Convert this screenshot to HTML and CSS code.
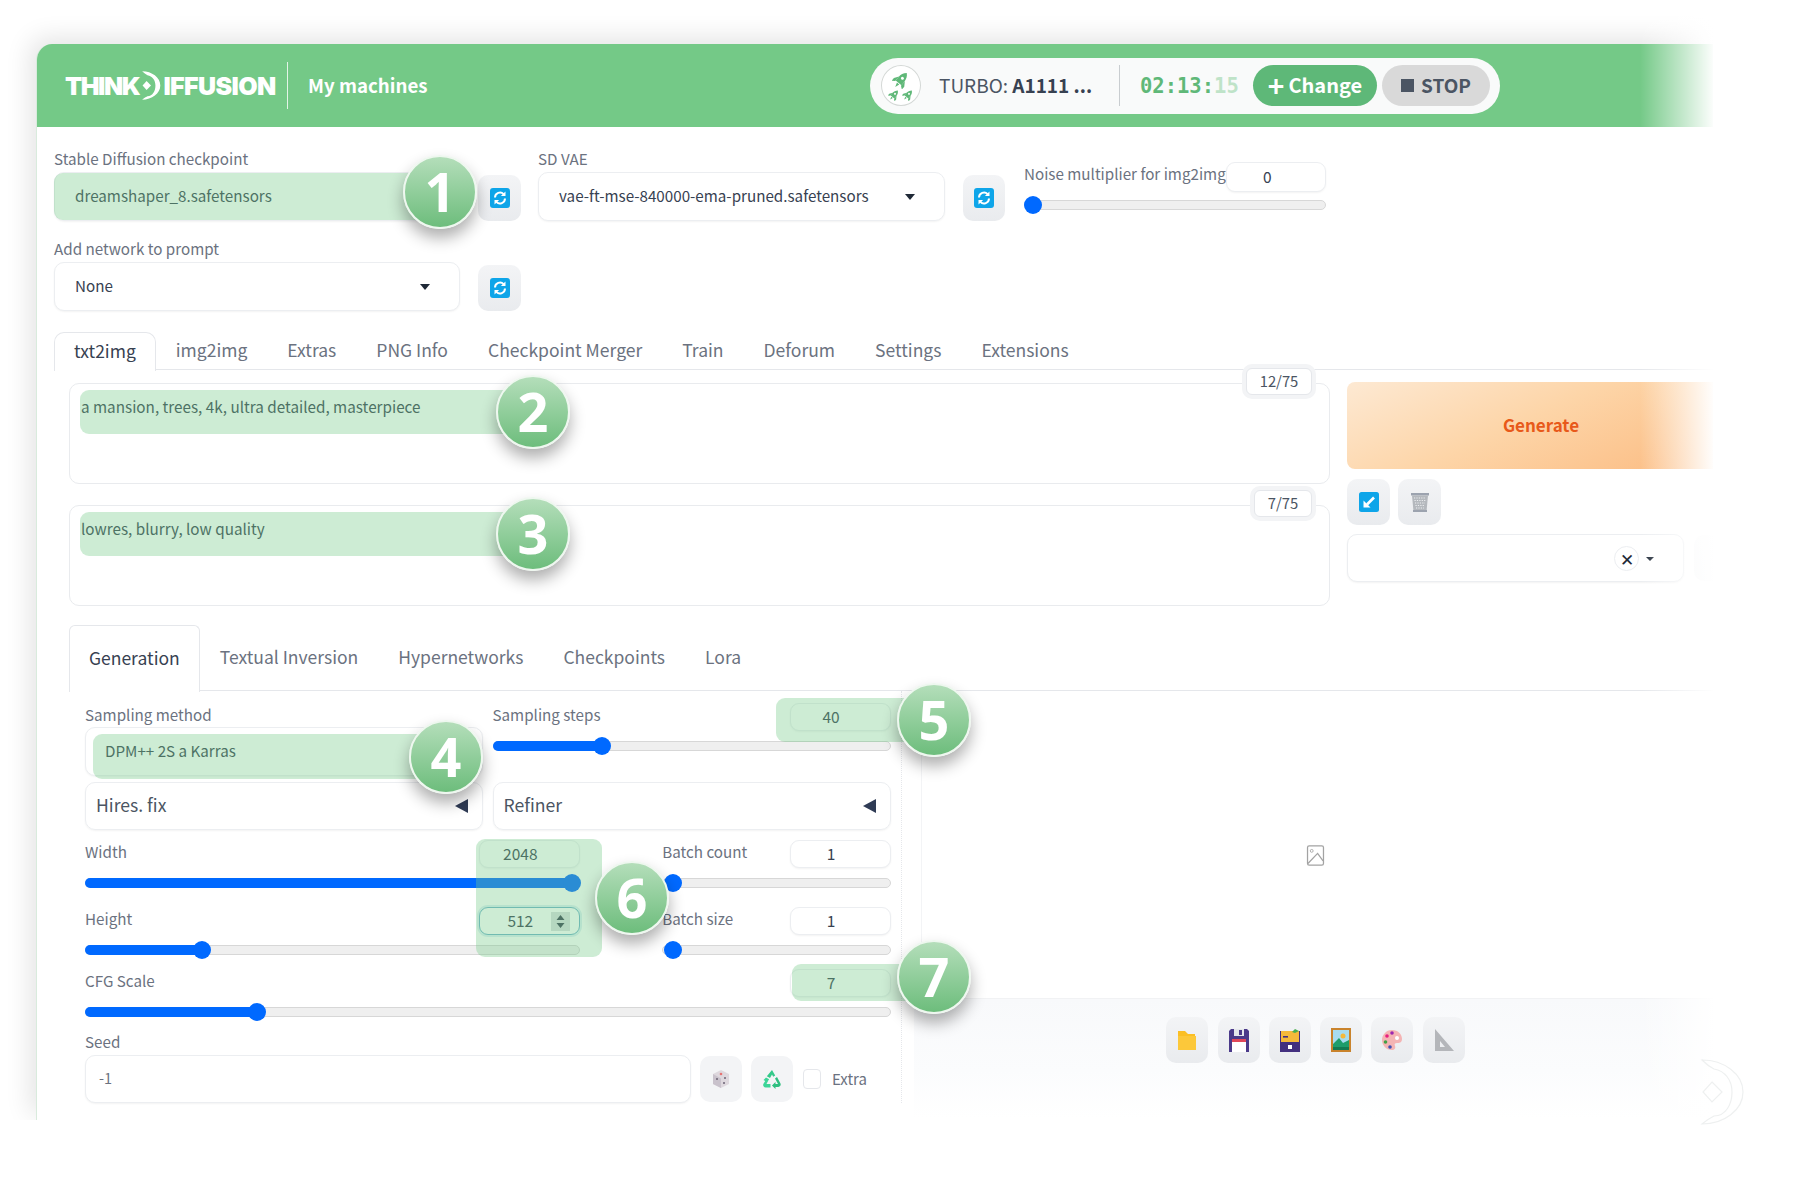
FILE: index.html
```html
<!DOCTYPE html>
<html lang="en">
<head>
<meta charset="utf-8">
<title>ThinkDiffusion</title>
<link rel="stylesheet" href="styles.css">
</head>
<body>
<svg class="defs" width="0" height="0" aria-hidden="true">
  <symbol id="refresh" viewBox="0 0 20 20">
    <rect width="20" height="20" rx="3" fill="#0ea5e9"/>
    <path d="M5 9.500a5 5 0 0 1 8.600-3.400M15 10.500a5 5 0 0 1-8.600 3.400" fill="none" stroke="#fff" stroke-width="2"/>
    <path d="M15.500 3.500v4.600h-4.600zM4.500 16.500v-4.600h4.600z" fill="#fff"/>
  </symbol>
  <symbol id="rocket" viewBox="0 0 24 24">
    <g transform="rotate(40 12 12)">
      <path d="M12 0c3.500 3 5 7 5 11v6H7v-6c0-4 1.500-8 5-11z" fill="currentColor"/>
      <path d="M7 10l-4 6v5l4-3zM17 10l4 6v5l-4-3zM10 18h4l-2 6z" fill="currentColor"/>
      <circle cx="12" cy="9" r="2" fill="#fff"/>
    </g>
  </symbol>
  <symbol id="dmark" viewBox="0 0 48 70">
    <path d="M4 3c22 0 41 14 41 32S26 67 4 67c6-5 10-7 12-8 12 0 18-12 18-24S27 14 16 12C12 10 8 7 4 3z" fill="currentColor"/>
    <path d="M14 25l10 10-10 10-9-10z" fill="currentColor"/>
  </symbol>
</svg>
<div class="stage">
  <div class="card">
    <header class="topbar">
      <div class="logo"><span class="logo-think">THINK</span><svg class="logo-d"><use href="#dmark"/></svg><span>IFFUSION</span></div>
      <div class="topbar-sep"></div>
      <div class="machines">My machines</div>
      <div class="pill">
        <div class="rocket-ring">
          <svg class="rk rk-a"><use href="#rocket"/></svg>
          <div class="rk-row"><svg class="rk rk-b"><use href="#rocket"/></svg><svg class="rk rk-b"><use href="#rocket"/></svg></div>
        </div>
        <div class="turbo">TURBO: <b>A1111 ...</b></div>
        <div class="pill-sep"></div>
        <div class="timer">02:13:<span class="timer-dim">15</span></div>
        <div class="pill-btn pill-change"><span class="plus">+</span> Change</div>
        <div class="pill-btn pill-stop"><span class="stop-sq"></span> STOP</div>
      </div>
    </header>

    <main class="content">
      <section class="settings-row">
        <div class="setting w467">
          <div class="label lh20">Stable Diffusion checkpoint</div>
          <div class="ctl-row">
            <div class="select grow"><span>dreamshaper_8.safetensors</span></div>
            <div class="tool tool-r"><svg class="ic20"><use href="#refresh"/></svg></div>
          </div>
        </div>
        <div class="setting w467 gap17">
          <div class="label lh20">SD VAE</div>
          <div class="ctl-row">
            <div class="select grow"><span>vae-ft-mse-840000-ema-pruned.safetensors</span><i class="caret"></i></div>
            <div class="tool tool-r tool-narrow"><svg class="ic20"><use href="#refresh"/></svg></div>
          </div>
        </div>
        <div class="noise">
          <div class="field-head">
            <div class="label noise-label">Noise multiplier for img2img</div>
            <div class="num num-noise">0</div>
          </div>
          <div class="slider"><i class="thumb thumb-0"></i></div>
        </div>
      </section>
      <section class="settings-row second">
        <div class="setting w467">
          <div class="label lh20">Add network to prompt</div>
          <div class="ctl-row">
            <div class="select grow"><span>None</span><i class="caret"></i></div>
            <div class="tool tool-r"><svg class="ic20"><use href="#refresh"/></svg></div>
          </div>
        </div>
      </section>

      <nav class="tabs">
        <div class="tab active">txt2img</div><div class="tab">img2img</div><div class="tab">Extras</div><div class="tab">PNG Info</div><div class="tab">Checkpoint Merger</div><div class="tab">Train</div><div class="tab">Deforum</div><div class="tab">Settings</div><div class="tab">Extensions</div>
      </nav>

      <section class="prompt-area">
        <div class="prompts">
          <div class="prompt">a mansion, trees, 4k, ultra detailed, masterpiece<div class="counter c12">12/75</div></div>
          <div class="prompt">lowres, blurry, low quality<div class="counter c7">7/75</div></div>
        </div>
        <div class="actions">
          <div class="generate">Generate</div>
          <div class="action-tools">
            <div class="tool tool-a"><svg class="ic20" viewBox="0 0 20 20"><rect width="20" height="20" rx="2.500" fill="#0ea5e9"/><path d="M15 5.500L8 12.500" stroke="#fff" stroke-width="2.600"/><path d="M4.500 8.500v7h7z" fill="#fff"/></svg></div>
            <div class="tool tool-a"><svg class="ic20" viewBox="0 0 20 20"><path d="M1 1h18v2.500H1z" fill="#9ca3af"/><path d="M2 3.500h16l-1.500 16h-13z" fill="#b4b8bd"/><path d="M4 6h12M4.500 8.500h11M5 11h10M5.500 13.500h9M6 16h8" stroke="#eceef0" stroke-width="1" stroke-dasharray="1.200 1.200"/><path d="M3 18h14v2H3z" fill="#9ca3af"/></svg></div>
          </div>
          <div class="styles-row">
            <div class="select styles"><span class="close">✕</span><i class="caret caret-sm"></i></div>
            <div class="tool tool-a"></div>
          </div>
        </div>
      </section>

      <nav class="subtabs">
        <div class="subtab active">Generation</div><div class="subtab">Textual Inversion</div><div class="subtab">Hypernetworks</div><div class="subtab">Checkpoints</div><div class="subtab">Lora</div>
      </nav>

      <section class="workspace">
        <div class="form">
          <div class="two-col">
            <div class="col">
              <div class="label lh24">Sampling method</div>
              <div class="select sampler"><span>DPM++ 2S a Karras</span></div>
            </div>
            <div class="col">
              <div class="field-head"><div class="label lh24">Sampling steps</div><div class="num">40</div></div>
              <div class="slider"><i class="fill fill-steps"></i><i class="thumb thumb-steps"></i></div>
            </div>
          </div>
          <div class="two-col accordions">
            <div class="col accordion">Hires. fix<i class="tri"></i></div>
            <div class="col accordion">Refiner<i class="tri"></i></div>
          </div>
          <div class="size-grid">
            <div class="size-col">
              <div class="field-head"><div class="label lh24">Width</div><div class="num">2048</div></div>
              <div class="slider"><i class="fill fill-width"></i><i class="thumb thumb-width"></i></div>
              <div class="field-head next"><div class="label lh24">Height</div><div class="num focused">512<svg class="spin" viewBox="0 0 19 19"><rect width="19" height="19" fill="#d9dee0"/><path d="M9.500 3l4 5h-8zM9.500 16l-4-5h8z" fill="#374151"/></svg></div></div>
              <div class="slider"><i class="fill fill-height"></i><i class="thumb thumb-height"></i></div>
            </div>
            <div class="batch-col">
              <div class="field-head"><div class="label lh24">Batch count</div><div class="num">1</div></div>
              <div class="slider"><i class="thumb thumb-batch"></i></div>
              <div class="field-head next"><div class="label lh24">Batch size</div><div class="num">1</div></div>
              <div class="slider"><i class="thumb thumb-batch"></i></div>
            </div>
          </div>
          <div class="cfg">
            <div class="field-head"><div class="label lh24">CFG Scale</div><div class="num">7</div></div>
            <div class="slider"><i class="fill fill-cfg"></i><i class="thumb thumb-cfg"></i></div>
          </div>
          <div class="label lh24 seed-label">Seed</div>
          <div class="seed-row">
            <div class="select seed"><span>-1</span></div>
            <div class="tool tool-faint"><svg class="ic20" viewBox="0 0 20 20"><path d="M10 1l8 4v10l-8 4-8-4V5z" fill="#ded8de"/><path d="M10 9.500v9.500l-8-4V5z" fill="#c9c2cc"/><circle cx="10" cy="5" r="1.300" fill="#e57373"/><circle cx="6" cy="10" r="1" fill="#6b6375"/><circle cx="14" cy="9" r="1" fill="#6b6375"/><circle cx="13" cy="14" r="1" fill="#6b6375"/></svg></div>
            <div class="tool tool-faint"><svg class="ic20" viewBox="0 0 20 20"><path d="M10 1l3.200 5.500-2 1.200L10 5.600 8 9 4.800 7.200z" fill="#34c98a"/><path d="M15 8l3.500 6.500a2.500 2.500 0 0 1-2.200 3.500h-2.800v2l-3.500-3.500 3.500-3.500v2h2.500L13 9.500z" fill="#2fbf80"/><path d="M4 8.500l3.200 1.800-.8 1L4.500 15h4v3.500H3.700a2.500 2.500 0 0 1-2.200-3.700L3.200 12 1.500 11z" fill="#3dd598"/></svg></div>
            <div class="checkbox"></div>
            <div class="label extra">Extra</div>
          </div>
        </div>

        <div class="output">
          <div class="preview">
            <svg class="pic" viewBox="0 0 21 25"><rect x="1" y="1" width="19" height="23" rx="2" fill="none" stroke="#a3a3a3" stroke-width="1.500"/><circle cx="6" cy="7" r="1.700" fill="none" stroke="#a3a3a3"/><path d="M1.500 22L13 10l6.500 9" fill="none" stroke="#a3a3a3" stroke-width="1.500"/></svg>
          </div>
          <div class="toolbar">
            <div class="tool tool-b"><svg class="ic20" viewBox="0 0 20 24"><path d="M1 3h7l3 3h7v16H1z" fill="#fbbf24"/><path d="M1 8h18v14H1z" fill="#fcc83a"/></svg></div>
            <div class="tool tool-b"><svg class="ic20" viewBox="0 0 20 24"><path d="M2 1h16l2 2v21H0V3z" fill="#4b3a8a"/><rect x="5" y="1" width="10" height="7" fill="#e5e7eb"/><rect x="10" y="2" width="3" height="5" fill="#4b3a8a"/><rect x="3" y="12" width="14" height="12" fill="#fff"/><rect x="3" y="11" width="14" height="3" fill="#e0485a"/></svg></div>
            <div class="tool tool-b"><svg class="ic20" viewBox="0 0 20 24"><rect x="0" y="3" width="20" height="21" fill="#43307f"/><rect x="1" y="3" width="18" height="11" fill="#f5b93a"/><path d="M12 4l3-3 4 2-4 2z" fill="#4caf50"/><rect x="3" y="8" width="5" height="1.600" fill="#43307f"/><rect x="8" y="17" width="4" height="4" fill="#fff"/></svg></div>
            <div class="tool tool-b"><svg class="ic20" viewBox="0 0 20 24"><rect width="20" height="24" fill="#c9832c"/><rect x="2" y="2" width="16" height="20" fill="#a8dcef"/><circle cx="12" cy="8" r="2.500" fill="#f5b93a"/><path d="M2 16l6-6 4 5 6-3v10H2z" fill="#1f9d6b"/><path d="M2 19h16v3H2z" fill="#157a52"/></svg></div>
            <div class="tool tool-b"><svg class="ic20" viewBox="0 0 20 24"><path d="M10 2c6 0 10 4 10 9 0 4-3 4-5 4-2 0-3 1-2 3 1 2-.5 4-3 4C4 22 0 17 0 12S4 2 10 2z" fill="#f4b4b4"/><circle cx="5" cy="8" r="1.800" fill="#e91e80"/><circle cx="10" cy="5" r="1.800" fill="#9c27b0"/><circle cx="3.500" cy="14" r="1.800" fill="#43a047"/><circle cx="8" cy="19" r="1.800" fill="#3f51b5"/><circle cx="15" cy="10" r="2" fill="#fff"/></svg></div>
            <div class="tool tool-b"><svg class="ic20" viewBox="0 0 20 24"><path fill-rule="evenodd" d="M1 1l19 22H1zM6 13v6h5z" fill="#b4b6ba"/></svg></div>
          </div>
        </div>
      </section>
    </main>
  </div>

  <div class="fade-right"></div>
  <div class="fade-bottom"></div>
  <svg class="watermark" viewBox="0 0 48 70"><path d="M4 3c22 0 41 14 41 32S26 67 4 67c6-5 10-7 12-8 12 0 18-12 18-24S27 14 16 12C12 10 8 7 4 3z" fill="none" stroke="#eef0f0" stroke-width="1.200"/><path d="M14 25l10 10-10 10-9-10z" fill="none" stroke="#eef0f0" stroke-width="1.200"/></svg>

  <div class="hl h1"></div><div class="hl h2"></div><div class="hl h3"></div><div class="hl h4"></div><div class="hl h5"></div><div class="hl h6"></div><div class="hl h7"></div>
  <div class="badge b1">1</div><div class="badge b2">2</div><div class="badge b3">3</div><div class="badge b4">4</div><div class="badge b5">5</div><div class="badge b6">6</div><div class="badge b7">7</div>
</div>
</body>
</html>
```
FILE: styles.css
```css
* { box-sizing: border-box; }
html, body { margin: 0; padding: 0; background: #fff; }
body { font-family: "Noto Sans CJK SC", "Noto Sans", sans-serif; color: #374151; }
.defs { position: absolute; }
i { display: block; }

.stage { position: relative; width: 1800px; height: 1200px; overflow: hidden; padding: 44px 0 0 36px; background: #fff; }
.card { width: 1677px; height: 1076px; overflow: hidden; background: #fff; border-radius: 16px 0 0 0; border-left: 1px solid #d9ebdd; box-shadow: -6px -6px 26px rgba(0,0,0,.11); }

/* header */
.topbar { height: 83px; background: #74c987; display: flex; align-items: center; padding-left: 28px; color: #fff; }
.logo { display: flex; align-items: center; font-family: Inter, sans-serif; font-weight: 900; font-size: 25px; letter-spacing: -0.6px; line-height: 30px; width: 222px; }
.logo-think { letter-spacing: -1.400px; }
.logo-d { width: 22px; height: 31px; margin: 0 1px 0 1px; color: #fff; }
.topbar-sep { width: 1px; height: 47px; background: rgba(255,255,255,.8); }
.machines { margin-left: 20px; font-size: 18.700px; font-weight: 700; line-height: 22px; padding-bottom: 2px; width: 562px; }
.pill { width: 630px; height: 56px; border-radius: 28px; background: #f9fafa; display: flex; align-items: center; padding-left: 11px; }
.rocket-ring { width: 40px; height: 41px; border-radius: 50%; border: 1.500px solid #d4d8d6; display: flex; flex-direction: column; align-items: center; justify-content: center; color: #5fb878; background: #fff; }
.rk { display: block; }
.rk-a { width: 18px; height: 18px; }
.rk-row { display: flex; gap: 2px; }
.rk-b { width: 12px; height: 12px; }
.turbo { margin-left: 18px; width: 180px; font-size: 19px; line-height: 26px; padding-bottom: 2px; color: #4b5563; }
.turbo b { font-weight: 700; color: #374151; }
.pill-sep { width: 1px; height: 41px; background: #c9cdd0; }
.timer { margin-left: 20px; width: 113px; font-family: "DejaVu Sans Mono", monospace; font-weight: 700; font-size: 20.500px; color: #5fb878; line-height: 28px; }
.timer-dim { color: #bfe3c8; }
.pill-btn { height: 41px; border-radius: 21px; display: flex; align-items: center; justify-content: center; font-weight: 700; line-height: 26px; padding-bottom: 2px; }
.pill-change { width: 124px; background: #5eb878; color: #fff; gap: 4px; font-size: 20px; }
.plus { font-size: 28px; line-height: 26px; font-weight: 700; }
.pill-stop { margin-left: 5px; width: 108px; background: #d9d9d9; color: #4b5563; font-weight: 600; gap: 7px; font-size: 19px; }
.stop-sq { width: 13px; height: 13px; background: #4b5563; margin-top: 2px; }

/* top settings */
.content { padding: 23px 0 0 17px; }
.settings-row { display: flex; }
.second { margin-top: 19px; }
.setting { display: flex; flex-direction: column; }
.w467 { width: 467px; }
.gap17 { margin-left: 17px; }
.label { color: #6b7280; font-size: 15.200px; white-space: nowrap; }
.lh20 { height: 22px; line-height: 17px; }
.lh24 { height: 24px; line-height: 22px; }
.ctl-row { display: flex; gap: 18px; align-items: flex-end; }
.select { height: 49px; border: 1px solid #eceef1; border-radius: 10px; background: #fff; box-shadow: 0 1px 2px rgba(0,0,0,.05); display: flex; align-items: center; justify-content: space-between; padding: 0 29px 3px 20px; font-size: 15.200px; line-height: 22px; color: #374151; white-space: nowrap; }
.grow { flex: 1; min-width: 0; }
.caret { width: 0; height: 0; border-left: 5px solid transparent; border-right: 5px solid transparent; border-top: 6px solid #1f2937; margin-top: 3px; }
.caret-sm { border-left-width: 4px; border-right-width: 4px; border-top-width: 4px; margin-top: 1px; }
.tool { display: flex; align-items: center; justify-content: center; border-radius: 10px; background: linear-gradient(180deg, #f3f4f6, #e9ebee); flex: none; }
.tool-r { width: 43px; height: 46px; }
.tool-narrow { width: 42px; }
.ic20 { width: 20px; height: 20px; display: block; }
.noise { width: 302px; margin-left: 19px; padding-top: 12px; }
.noise-label { line-height: 22px; }
.field-head { display: flex; justify-content: space-between; align-items: flex-start; height: 28px; margin-bottom: 10px; }
.noise .field-head { height: 30px; margin-bottom: 8px; }
.num { width: 101px; height: 28px; border: 1px solid #eceef1; border-radius: 9px; background: #fff; box-shadow: 0 1px 2px rgba(0,0,0,.05); font-size: 15.500px; line-height: 25px; text-align: center; padding-right: 19px; color: #374151; position: relative; }
.num-noise { height: 30px; line-height: 27px; padding-right: 17px; }
.focused { border-color: #6fb3c9; box-shadow: 0 0 0 2px rgba(120,190,210,.25); }
.spin { position: absolute; right: 9px; top: 4px; width: 19px; height: 19px; }
.slider { position: relative; height: 10px; border-radius: 5px; background: #efefef; border: 1px solid #d7d7d7; }
.fill { position: absolute; left: -1px; top: -1px; height: 10px; border-radius: 5px; background: #0069ff; }
.thumb { position: absolute; top: -5px; width: 18px; height: 18px; border-radius: 50%; background: #0069ff; }
.thumb-0 { left: -1px; }
.fill-steps { width: 109px; }
.thumb-steps { left: 99px; }
.fill-width { width: 487px; }
.thumb-width { left: 477px; }
.fill-height { width: 117px; }
.thumb-height { left: 107px; }
.thumb-batch { left: 1px; }
.fill-cfg { width: 172px; }
.thumb-cfg { left: 162px; }

/* tabs */
.tabs { display: flex; margin-top: 21px; height: 38px; border-bottom: 1px solid #e5e7eb; }
.tab { padding: 0 20px; height: 38px; font-size: 17.520px; line-height: 35px; color: #6b7280; white-space: nowrap; }
.tab.active { border: 1px solid #e5e7eb; border-bottom: 0; border-radius: 10px 10px 0 0; background: #fff; color: #374151; height: 39px; padding: 0 19px; }

/* prompts */
.prompt-area { display: flex; margin: 13px 0 0 15px; }
.prompts { width: 1261px; display: flex; flex-direction: column; gap: 21px; flex: none; }
.prompt { position: relative; height: 101px; border: 1px solid #e9ebee; border-radius: 10px; padding: 11px 11px; font-size: 15.250px; line-height: 22px; color: #374151; }
.counter { position: absolute; top: -16px; right: 17px; height: 27px; background: #fff; border: 1px solid #e5e7eb; border-radius: 6px; box-shadow: 0 0 0 4px #f3f4f6; text-align: center; font-size: 14.800px; line-height: 24px; color: #4b5563; }
.c12 { width: 66px; }
.c7 { width: 58px; }
.actions { width: 388px; margin-left: 17px; margin-top: -1px; flex: none; }
.generate { height: 87px; border-radius: 8px; background: linear-gradient(155deg, #fde9d3 0%, #fdd5a8 45%, #fbb97e 100%); display: flex; align-items: center; justify-content: center; font-size: 17px; font-weight: 700; color: #e8591a; line-height: 22px; padding-bottom: 2px; }
.action-tools { display: flex; gap: 8px; margin-top: 10px; }
.tool-a { width: 43px; height: 46px; }
.styles-row { display: flex; gap: 10px; margin-top: 9px; width: 400px; }
.styles { width: 337px; height: 48px; justify-content: flex-end; padding: 0 29px 0 0; gap: 7px; flex: none; }
.close { width: 25px; height: 25px; border-radius: 50%; border: 1px solid #eceef1; display: flex; align-items: center; justify-content: center; font-size: 17px; line-height: 17px; color: #1f2937; }
.styles-row .tool-a { height: 46px; margin-top: 1px; opacity: .5; }

/* sub tabs */
.subtabs { display: flex; margin: 19px 0 0 15px; height: 66px; border-bottom: 1px solid #e5e7eb; }
.subtab { padding: 0 20px; height: 66px; font-size: 17.500px; line-height: 64px; color: #6b7280; white-space: nowrap; }
.subtab.active { height: 67px; border: 1px solid #e5e7eb; border-bottom: 0; border-radius: 6px 6px 0 0; background: #fff; color: #374151; padding: 0 19px; }

/* generation form */
.workspace { display: flex; margin-left: 31px; }
.form { width: 817px; padding: 12px 10px 0 0; border-right: 1px dotted #e5e7eb; flex: none; height: 412px; }
.two-col { display: flex; gap: 10px; }
.col { width: 398px; }
.col + .col { width: 399px; }
.sampler { height: 49px; padding-left: 19px; }
.accordions { margin-top: 6px; }
.accordion { height: 48px; border: 1px solid #eceef1; border-radius: 10px; box-shadow: 0 1px 2px rgba(0,0,0,.05); display: flex; align-items: center; justify-content: space-between; padding: 0 14px 2px 10px; font-size: 17.600px; line-height: 24px; color: #4b5563; }
.tri { width: 0; height: 0; border-top: 7px solid transparent; border-bottom: 7px solid transparent; border-right: 13px solid #2f3b55; margin-top: 2px; }
.size-grid { display: flex; gap: 82px; margin-top: 10px; }
.size-col { width: 496px; }
.batch-col { width: 229px; }
.next { margin-top: 19px; }
.cfg { margin-top: 14px; }
.seed-label { margin-top: 13px; }
.seed-row { display: flex; align-items: center; margin-top: 1px; }
.seed { width: 606px; height: 48px; padding-left: 13px; font-size: 14.500px; color: #6b7280; }
.tool-faint { width: 42px; height: 46px; margin-left: 9px; background: #f3f4f6; }
.checkbox { width: 18px; height: 20px; margin-left: 10px; border: 1px solid #e5e7eb; border-radius: 4px; background: #fff; }
.extra { margin-left: 11px; font-size: 15px; line-height: 22px; height: auto; }

/* output */
.output { flex: 1; display: flex; flex-direction: column; margin: 12px 0 0 19px; border-left: 1px solid #f3f4f6; }
.preview { height: 295px; display: flex; align-items: center; justify-content: center; padding-top: 10px; padding-right: 5px; }
.pic { width: 21px; height: 21px; display: block; }
.toolbar { height: 120px; background: linear-gradient(180deg, #f8f9fb 0%, #fbfcfd 60%, #fff 100%); border-top: 1px solid #f1f2f4; display: flex; gap: 9.300px; padding: 18px 0 0 4px; justify-content: center; margin-left: -8px; align-items: flex-start; }
.tool-b { width: 42px; height: 46px; }
.tool-b .ic20 { width: 20px; height: 24px; }

/* overlays */
.fade-right { position: absolute; left: 1640px; top: 0; width: 160px; height: 1200px; background: linear-gradient(90deg, rgba(255,255,255,0) 0, #fff 75px); }
.fade-bottom { position: absolute; left: 0; top: 1120px; width: 1800px; height: 80px; background: #fff; }
.watermark { position: absolute; left: 1698px; top: 1057px; width: 48px; height: 70px; }
.hl { position: absolute; background: rgba(116,201,135,.36); border-radius: 9px; }
.h1 { left: 54px; top: 173px; width: 386px; height: 47px; }
.h2 { left: 80px; top: 390px; width: 452px; height: 44px; }
.h3 { left: 80px; top: 512px; width: 452px; height: 44px; }
.h4 { left: 93px; top: 734px; width: 353px; height: 45px; }
.h5 { left: 776px; top: 698px; width: 158px; height: 44px; }
.h6 { left: 476px; top: 839px; width: 126px; height: 118px; }
.h7 { left: 792px; top: 964px; width: 142px; height: 37px; }
.badge { position: absolute; width: 74px; height: 74px; border-radius: 50%; border: 2.500px solid #eef7ef; background: linear-gradient(180deg, #b4deba 0%, #6dbd7c 100%); box-shadow: 0 9px 16px rgba(0,0,0,.32); color: #fff; font-family: "Open Sans", sans-serif; font-weight: 700; font-size: 54px; line-height: 69px; text-align: center; }
.b1 { left: 403px; top: 155px; }
.b2 { left: 496px; top: 375px; }
.b3 { left: 496px; top: 497px; }
.b4 { left: 409px; top: 720px; }
.b5 { left: 897px; top: 683px; }
.b6 { left: 595px; top: 861px; }
.b7 { left: 897px; top: 940px; }
```
